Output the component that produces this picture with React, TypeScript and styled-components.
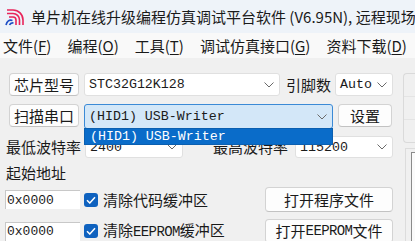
import React from 'react';
import styled, { createGlobalStyle } from 'styled-components';

const GlobalStyle = createGlobalStyle`
  body {
    margin: 0;
    background: #f0f0f0;
    font-family: 'Noto Sans CJK SC', 'Noto Sans', sans-serif;
    font-size: 15px;
    color: #1a1a1a;
    overflow: hidden;
  }
`;

const mono = `'Liberation Mono', 'DejaVu Sans Mono', monospace`;

const Window = styled.div`
  width: 415px;
  height: 241px;
  overflow: hidden;
  display: flex;
  flex-direction: column;
`;

const TitleBar = styled.div`
  height: 33px;
  flex: none;
  background: #eef3f9;
  display: flex;
  align-items: center;
  padding-left: 5px;
  gap: 6px;
  white-space: nowrap;
  overflow: hidden;
`;

const LogoSvg = styled.svg`
  flex: none;
`;

const TitleText = styled.span`
  font-size: 15px;
  line-height: 18px;
  color: #1a1a1a;
`;

const MenuBar = styled.div`
  height: 25px;
  flex: none;
  background: #f9f9f9;
  display: flex;
  align-items: center;
  padding-left: 3px;
  gap: 16px;
  white-space: nowrap;
  overflow: hidden;
`;

const MenuItem = styled.span`
  font-size: 15px;
  line-height: 18px;
  flex: none;
  u {
    text-decoration: underline;
    text-underline-offset: 2px;
  }
`;

const Main = styled.div`
  flex: 1;
  display: flex;
  padding-top: 15px;
`;

const LeftCol = styled.div`
  width: 393px;
  flex: none;
  display: flex;
  flex-direction: column;
`;

const Row = styled.div<{ $pl: number; $h: number; $mt: number; $align?: string }>`
  display: flex;
  align-items: ${(p) => p.$align || 'center'};
  padding-left: ${(p) => p.$pl}px;
  height: ${(p) => p.$h}px;
  margin-top: ${(p) => p.$mt}px;
`;

const Button = styled.div<{ $w: number; $h?: number; $ml?: number; $push?: boolean }>`
  width: ${(p) => p.$w}px;
  height: ${(p) => p.$h || 23}px;
  margin-left: ${(p) => (p.$push ? 'auto' : `${p.$ml || 0}px`)};
  flex: none;
  box-sizing: border-box;
  background: #fdfdfd;
  border: 1px solid #d3d3d3;
  border-bottom-color: #c2c2c2;
  border-radius: 4px;
  display: flex;
  align-items: center;
  justify-content: center;
  font-size: 15px;
  line-height: 18px;
  white-space: nowrap;
`;

const Combo = styled.div<{ $w: number; $h?: number; $ml?: number; $focused?: boolean }>`
  position: relative;
  width: ${(p) => p.$w}px;
  height: ${(p) => p.$h || 23}px;
  margin-left: ${(p) => p.$ml || 0}px;
  flex: none;
  box-sizing: border-box;
  background: ${(p) => (p.$focused ? '#d3e7f8' : '#ffffff')};
  border: 1px solid ${(p) => (p.$focused ? '#3b8ad6' : '#e0e0e0')};
  border-radius: 3px;
  display: flex;
  align-items: center;
  padding-left: 4px;
  font-family: ${mono};
  font-size: 13.3px;
  color: #1b1b1b;
  white-space: nowrap;
`;

const Chevron = styled.svg`
  position: absolute;
  right: 5px;
  top: 50%;
  margin-top: -3px;
`;

const DropList = styled.div`
  position: absolute;
  left: -1px;
  right: -1px;
  top: 100%;
  height: 17px;
  background: #0a6cc9;
  border: 1px solid #0a5fb0;
  box-sizing: border-box;
  color: #ffffff;
  font-family: ${mono};
  font-size: 13.3px;
  line-height: 15px;
  padding-left: 5px;
  z-index: 2;
`;

const Label = styled.span<{ $w?: number; $ml?: number }>`
  width: ${(p) => (p.$w ? `${p.$w}px` : 'auto')};
  margin-left: ${(p) => p.$ml || 0}px;
  font-size: 15px;
  line-height: 18px;
  white-space: nowrap;
  flex: none;
`;

const MonoPart = styled.span`
  font-family: ${mono};
  font-size: 14px;
  letter-spacing: -0.6px;
`;

const TextBox = styled.div`
  width: 75px;
  height: 19px;
  flex: none;
  box-sizing: border-box;
  background: #ffffff;
  border-top: 1px solid #c8c8c8;
  border-left: 1px solid #c8c8c8;
  display: flex;
  align-items: center;
  padding-left: 1px;
  font-family: ${mono};
  font-size: 13px;
  color: #1b1b1b;
`;

const Check = styled.div`
  width: 14px;
  height: 14px;
  margin-left: 4px;
  margin-right: 5px;
  flex: none;
  border-radius: 3px;
  background: #0f62bf;
  display: flex;
  align-items: center;
  justify-content: center;
`;

const RightCol = styled.div`
  flex: 1;
  margin-left: 10px;
  display: flex;
  flex-direction: column;
`;

const TopPanel = styled.div`
  height: 68px;
  border: 1px solid #dadada;
  border-right: none;
  border-radius: 4px 0 0 4px;
  display: flex;
  flex-direction: column;
  justify-content: space-evenly;
`;

const PanelLine = styled.div`
  height: 1px;
  background: #e4e4e4;
`;

const OuterFrame = styled.div`
  flex: 1;
  margin-top: 5px;
  margin-left: 2px;
  border-top: 1px solid #dcdcdc;
  border-left: 1px solid #dcdcdc;
  padding: 3px 0 0 5px;
  display: flex;
`;

const InnerBox = styled.div`
  flex: 1;
  background: #fafafa;
  border-top: 1px solid #8a8a8a;
  border-left: 1px solid #8a8a8a;
`;

const ChevronIcon = () => (
  <Chevron width="10" height="6" viewBox="0 0 10 6">
    <path d="M0.5 0.5 L5 5 L9.5 0.5" fill="none" stroke="#6a6a6a" strokeWidth="1" />
  </Chevron>
);

const CheckMark = () => (
  <svg width="10" height="8" viewBox="0 0 10 8">
    <path d="M1 4.2 L3.8 7 L9 1.2" fill="none" stroke="#ffffff" strokeWidth="1.5" />
  </svg>
);

const Logo = () => (
  <LogoSvg width="20" height="18" viewBox="0 0 20 18">
    <g fill="none" stroke="#e8235a" strokeWidth="1.6">
      <path d="M2 2 H8 A10 10 0 0 1 18 12 V17" />
      <path d="M2 5.5 H8 A6.5 6.5 0 0 1 14.5 12 V17" />
      <path d="M4 9 H8 A3 3 0 0 1 11 12 V17" />
    </g>
    <g fill="none" stroke="#1f4fc6" strokeWidth="1.7">
      <path d="M1 17 Q2.5 11 7.5 12.5" />
      <path d="M4.5 17 Q5.5 14.5 8.5 15" />
    </g>
  </LogoSvg>
);

export default function App() {
  return (
    <>
      <GlobalStyle />
      <Window>
        <TitleBar>
          <Logo />
          <TitleText>单片机在线升级编程仿真调试平台软件 (V6.95N), 远程现场升级</TitleText>
        </TitleBar>
        <MenuBar>
          <MenuItem>文件(<u>F</u>)</MenuItem>
          <MenuItem>编程(<u>O</u>)</MenuItem>
          <MenuItem>工具(<u>T</u>)</MenuItem>
          <MenuItem>调试仿真接口(<u>G</u>)</MenuItem>
          <MenuItem>资料下载(<u>D</u>)</MenuItem>
        </MenuBar>
        <Main>
          <LeftCol>
            <Row $pl={9} $h={23} $mt={0}>
              <Button $w={70}>芯片型号</Button>
              <Combo $w={196} $ml={5}>
                STC32G12K128
                <ChevronIcon />
              </Combo>
              <Label $w={49} $ml={6}>引脚数</Label>
              <Combo $w={58}>
                Auto
                <ChevronIcon />
              </Combo>
            </Row>
            <Row $pl={9} $h={25} $mt={8} $align="flex-start">
              <Button $w={70}>扫描串口</Button>
              <Combo $w={249} $h={25} $ml={5} $focused>
                (HID1) USB-Writer
                <ChevronIcon />
                <DropList>(HID1) USB-Writer</DropList>
              </Combo>
              <Button $w={54} $ml={5}>设置</Button>
            </Row>
            <Row $pl={6} $h={22} $mt={7}>
              <Label $w={79}>最低波特率</Label>
              <Combo $w={98} $h={22}>
                2400
                <ChevronIcon />
              </Combo>
              <Label $w={82} $ml={30}>最高波特率</Label>
              <Combo $w={98} $h={22}>
                115200
                <ChevronIcon />
              </Combo>
            </Row>
            <Row $pl={6} $h={20} $mt={5}>
              <Label>起始地址</Label>
            </Row>
            <Row $pl={5} $h={25} $mt={4}>
              <TextBox>0x0000</TextBox>
              <Check>
                <CheckMark />
              </Check>
              <Label>清除代码缓冲区</Label>
              <Button $w={128} $h={25} $push>打开程序文件</Button>
            </Row>
            <Row $pl={5} $h={24} $mt={7}>
              <TextBox>0x0000</TextBox>
              <Check>
                <CheckMark />
              </Check>
              <Label>
                清除<MonoPart>EEPROM</MonoPart>缓冲区
              </Label>
              <Button $w={128} $h={24} $push>
                打开<MonoPart>EEPROM</MonoPart>文件
              </Button>
            </Row>
          </LeftCol>
          <RightCol>
            <TopPanel>
              <PanelLine />
              <PanelLine />
            </TopPanel>
            <OuterFrame>
              <InnerBox />
            </OuterFrame>
          </RightCol>
        </Main>
      </Window>
    </>
  );
}
